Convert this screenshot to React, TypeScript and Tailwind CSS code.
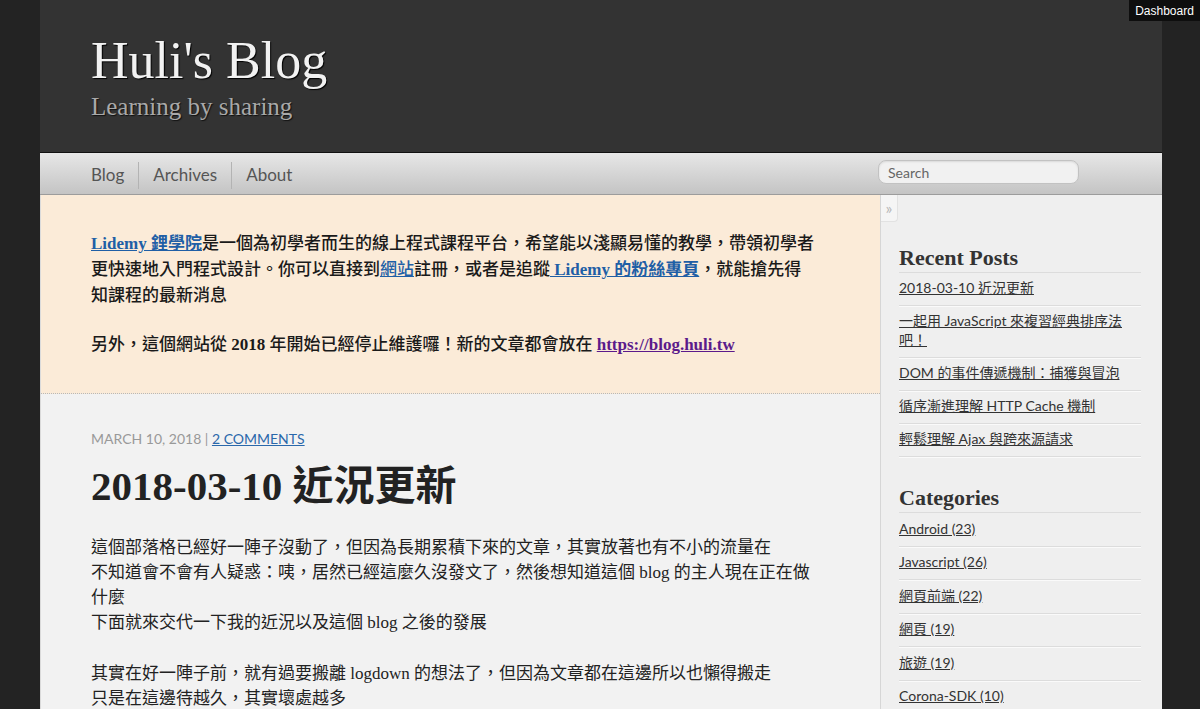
export default function App() {
  const serif = "font-['Liberation_Serif','Noto_Sans_CJK_TC',serif]";
  const sans = "font-['Lato','Noto_Sans_CJK_TC',sans-serif]";
  const recent = [
    "2018-03-10 近況更新",
    "一起用 JavaScript 來複習經典排序法吧！",
    "DOM 的事件傳遞機制：捕獲與冒泡",
    "循序漸進理解 HTTP Cache 機制",
    "輕鬆理解 Ajax 與跨來源請求",
  ];
  const cats = [
    "Android\u00a0(23)",
    "Javascript\u00a0(26)",
    "網頁前端\u00a0(22)",
    "網頁\u00a0(19)",
    "旅遊\u00a0(19)",
    "Corona-SDK\u00a0(10)",
    "Life\u00a0(8)",
  ];
  return (
    <div className="relative min-h-screen bg-[#232323]">
      <div className="absolute right-0 top-0 flex h-[21px] w-[71px] items-center justify-center bg-[#0e0e0e] font-['Liberation_Sans',sans-serif] text-[12px] text-white">
        Dashboard
      </div>
      <div className="ml-[40px] w-[1122px]">
        <header className={`h-[152px] bg-[#333333] pl-[51px] pt-[35px] ${serif}`}>
          <h1 className="text-[52px] leading-none text-[#f2f2f2] [text-shadow:1px_1px_1px_#000]">
            Huli's Blog
          </h1>
          <p className="mt-[7px] text-[25px] leading-none text-[#a9a9a9] [text-shadow:1px_1px_1px_#111]">
            Learning by sharing
          </p>
        </header>
        <nav
          className={`flex h-[43px] items-center border-t border-b border-t-[#111] border-b-[#9c9c9c] bg-linear-to-b from-[#e7e7e7] to-[#c4c4c4] pl-[51px] ${sans}`}
        >
          <ul className="flex items-center pt-[3px] text-[17px] text-[#555]">
            <li className="flex h-[27px] items-center pr-[14px]">Blog</li>
            <li className="flex h-[27px] items-center border-l border-[#b3b3b3] px-[14px]">Archives</li>
            <li className="flex h-[27px] items-center border-l border-[#b3b3b3] pl-[14px]">About</li>
          </ul>
          <div className="ml-auto mr-[83px] mb-[3px] flex h-[24px] w-[201px] items-center rounded-[8px] border border-[#c2c2c2] bg-[#f1f1f1] pl-[9px] text-[14px] text-[#666] shadow-[inset_0_1px_2px_rgba(0,0,0,0.1)]">
            Search
          </div>
        </nav>
        <div className="flex">
          <main className="w-[840px] border-l border-[#dadada]">
            <section
              className={`border-b border-dotted border-[#b8b8b8] bg-[#fbebd8] pb-[35px] pl-[50px] pr-[40px] pt-[36px] text-[17px] font-medium leading-[26px] text-[#1a1a1a] ${serif}`}
            >
              <p>
                <a className="font-bold text-[#1f5fa6] underline">Lidemy 鋰學院</a>
                是一個為初學者而生的線上程式課程平台，希望能以淺顯易懂的教學，帶領初學者
                <br />
                更快速地入門程式設計。你可以直接到<a className="text-[#1f5fa6] underline">網站</a>
                註冊，或者是追蹤<a className="font-bold text-[#1f5fa6] underline"> Lidemy 的粉絲專頁</a>，就能搶先得
                <br />
                知課程的最新消息
              </p>
              <p className="mt-[23px]">
                另外，這個網站從 <span className="font-bold">2018</span> 年開始已經停止維護囉！新的文章都會放在{" "}
                <a className="font-bold text-[#5b1a8b] underline">https://blog.huli.tw</a>
              </p>
            </section>
            <article className="bg-[#f2f2f2] pb-[40px] pl-[50px] pr-[40px] pt-[35px]">
              <div className={`text-[14px] uppercase leading-[20px] text-[#999] ${sans}`}>
                March 10, 2018 | <a className="text-[#2a68ab] underline">2 Comments</a>
              </div>
              <h2 className={`mt-[14px] text-[41px] font-bold leading-[46px] text-[#222] ${serif}`}>
                2018-03-10 近況更新
              </h2>
              <div className={`mt-[26px] text-[17px] leading-[25px] text-[#222] ${serif}`}>
                <p>
                  這個部落格已經好一陣子沒動了，但因為長期累積下來的文章，其實放著也有不小的流量在
                  <br />
                  不知道會不會有人疑惑：咦，居然已經這麼久沒發文了，然後想知道這個 blog 的主人現在正在做
                  <br />
                  什麼
                  <br />
                  下面就來交代一下我的近況以及這個 blog 之後的發展
                </p>
                <p className="mt-[26px]">
                  其實在好一陣子前，就有過要搬離 logdown 的想法了，但因為文章都在這邊所以也懶得搬走
                  <br />
                  只是在這邊待越久，其實壞處越多
                </p>
              </div>
            </article>
          </main>
          <aside className={`relative w-[282px] border-l border-[#d6d6d6] bg-[#efefef] pl-[18px] pr-[21px] pt-[52px] ${sans}`}>
            <div className="absolute left-0 top-0 flex h-[27px] w-[17px] items-center justify-center rounded-br-[4px] border-b border-r border-[#e2e2e2] bg-[#f5f5f5] text-[16px] leading-none text-[#b5b5b5]">
              »
            </div>
            <h3 className={`border-b border-[#dcdcdc] pb-[3px] text-[22px] font-bold leading-[22px] text-[#333] ${serif}`}>
              Recent Posts
            </h3>
            <ul className="text-[14px] leading-[19px] text-[#333]">
              {recent.map((t) => (
                <li key={t} className="border-b border-[#dcdcdc] pb-[8px] pt-[5px] shadow-[0_1px_0_#fafafa]">
                  <a className="underline">{t}</a>
                </li>
              ))}
            </ul>
            <h3 className={`mt-[30px] border-b border-[#dcdcdc] pb-[3px] text-[22px] font-bold leading-[22px] text-[#333] ${serif}`}>
              Categories
            </h3>
            <ul className="text-[14px] leading-[19px] text-[#333]">
              {cats.map((t) => (
                <li key={t} className="border-b border-[#dcdcdc] pb-[8px] pt-[5.5px] shadow-[0_1px_0_#fafafa]">
                  <a className="underline">{t}</a>
                </li>
              ))}
            </ul>
          </aside>
        </div>
      </div>
    </div>
  );
}
